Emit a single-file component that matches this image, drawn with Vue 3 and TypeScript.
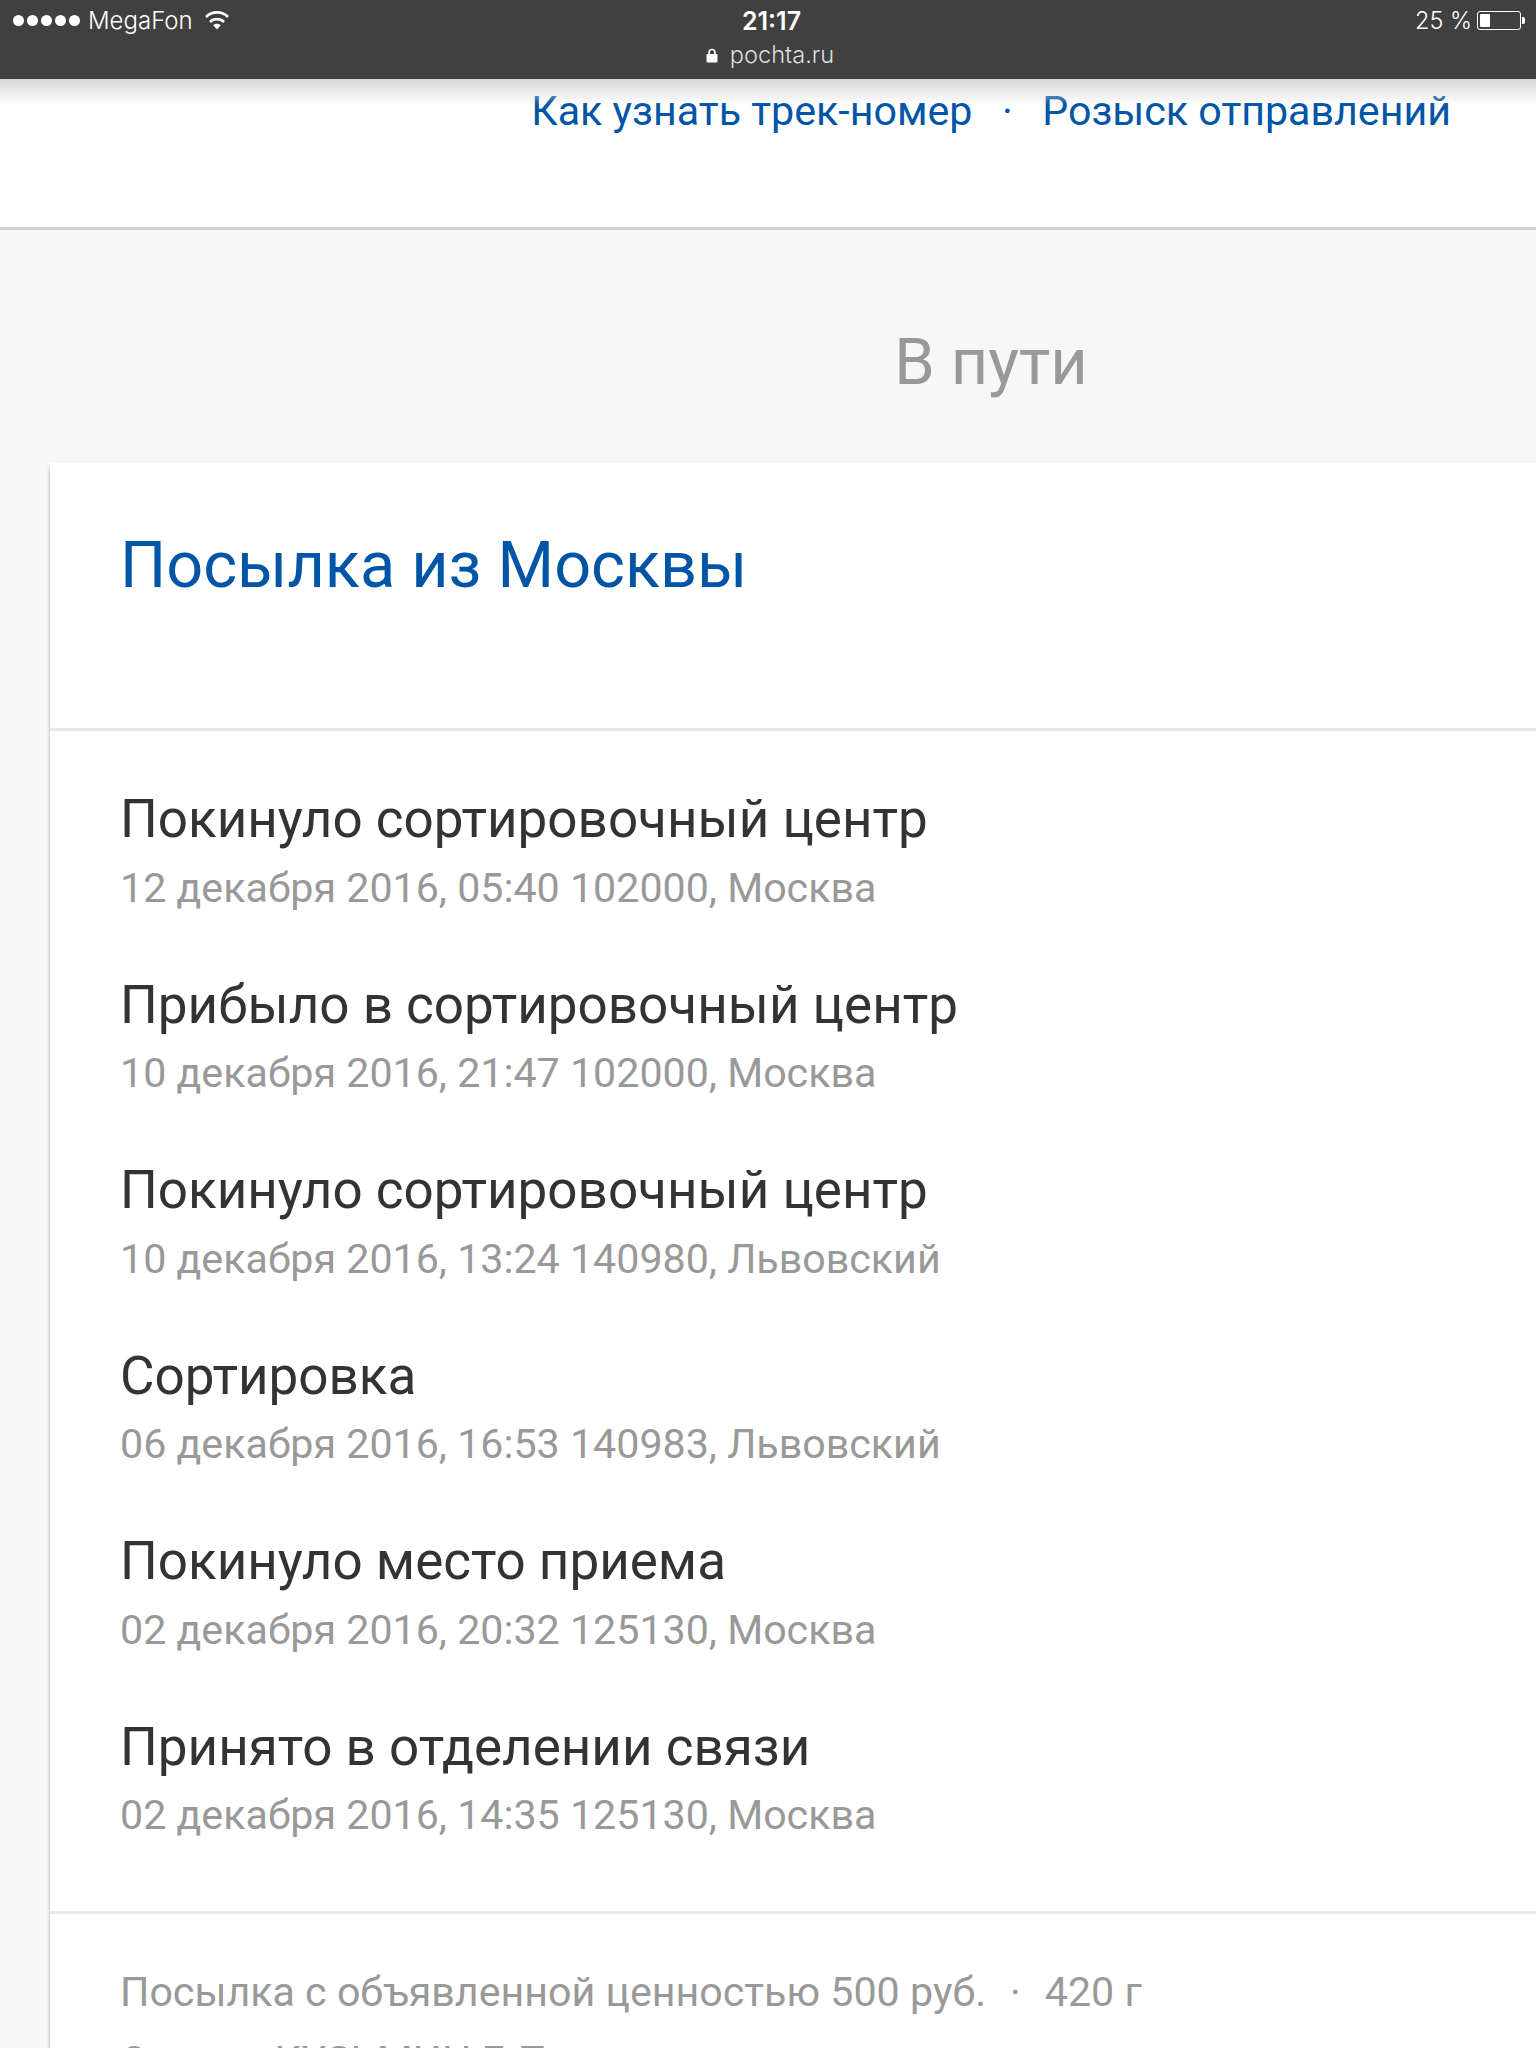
<script setup lang="ts">
interface Ev { title: string; meta: string }
const events: Ev[] = [
  { title: 'Покинуло сортировочный центр', meta: '12 декабря 2016, 05:40 102000, Москва' },
  { title: 'Прибыло в сортировочный центр', meta: '10 декабря 2016, 21:47 102000, Москва' },
  { title: 'Покинуло сортировочный центр', meta: '10 декабря 2016, 13:24 140980, Львовский' },
  { title: 'Сортировка', meta: '06 декабря 2016, 16:53 140983, Львовский' },
  { title: 'Покинуло место приема', meta: '02 декабря 2016, 20:32 125130, Москва' },
  { title: 'Принято в отделении связи', meta: '02 декабря 2016, 14:35 125130, Москва' },
]
</script>

<template>
  <div class="page">
    <div class="status">
      <div class="st-left">
        <span class="dots"><i v-for="n in 5" :key="n"></i></span>
        <span class="carrier">MegaFon</span>
        <svg class="wifi" width="26" height="19" viewBox="0 0 26 19">
          <path d="M13 18.500 9.200 14.200a5.600 5.600 0 0 1 7.600 0Z" fill="#fff"/>
          <path d="M6 11a10 10 0 0 1 14 0M2 6a15.500 15.500 0 0 1 22 0" fill="none" stroke="#fff" stroke-width="2.600"/>
        </svg>
      </div>
      <div class="st-mid">
        <div class="time">21:17</div>
        <div class="url">
          <svg width="12" height="15" viewBox="0 0 12 15"><path d="M3 7V4.500a3 3 0 0 1 6 0V7" fill="none" stroke="#fff" stroke-width="1.600"/><rect x="0.500" y="6" width="11" height="8.500" rx="1" fill="#fff"/></svg>
          <span>pochta.ru</span>
        </div>
      </div>
      <div class="st-right">
        <span>25 %</span>
        <span class="battery"><b></b></span>
        <span class="nub"></span>
      </div>
    </div>
    <div class="top">
      <div class="links">
        <a>Как узнать трек-номер</a>
        <span class="sep">·</span>
        <a>Розыск отправлений</a>
      </div>
    </div>
    <main class="body">
      <h1 class="state">В пути</h1>
      <section class="card">
        <h2 class="name">Посылка из Москвы</h2>
        <div class="events">
          <div v-for="(e, i) in events" :key="i" class="ev">
            <div class="ev-t">{{ e.title }}</div>
            <div class="ev-m">{{ e.meta }}</div>
          </div>
        </div>
        <div class="foot">
          <div class="foot-l">Посылка с объявленной ценностью 500 руб.<span class="dot">·</span>420 г</div>
          <div class="foot-l">От кого КУЗЬМИН Г. П.</div>
        </div>
      </section>
    </main>
  </div>
</template>

<style>
html, body { margin: 0; background: #f7f7f7; }
body { overflow: hidden; height: 2048px; }
</style>

<style scoped>
.page { width: 1536px; height: 2048px; overflow: hidden; font-family: Roboto, "Liberation Sans", sans-serif; background: #f7f7f7; position: relative; }
.status { height: 79px; background: #404040; color: #fff; display: grid; grid-template-columns: 1fr auto 1fr; padding: 0 11px 0 13px; box-sizing: border-box; font-family: Inter, "Liberation Sans", sans-serif; font-size: 23.600px; position: relative; z-index: 2; }
.status::after { content: ""; position: absolute; left: 0; right: 0; top: 79px; height: 26px; background: linear-gradient(to bottom, #d6d6d6, rgba(255,255,255,0)); pointer-events: none; }
.st-left { display: flex; align-items: flex-start; padding-top: 8px; height: 26px; line-height: 26px; }
.dots { display: flex; gap: 3px; margin-top: 7px; }
.dots i { width: 11px; height: 11px; border-radius: 50%; background: #fff; display: block; }
.carrier { margin-left: 8px; font-weight: 300; font-size: 24px; }
.wifi { margin-left: 11px; margin-top: 3px; }
.st-mid { text-align: center; padding-top: 8px; margin-left: 5px; }
.time { line-height: 26px; font-weight: 600; font-size: 25px; }
.url { display: flex; align-items: center; justify-content: center; gap: 12px; margin-top: 8px; margin-right: 3px; color: #ddd; line-height: 26px; font-weight: 300; }
.st-right { display: flex; justify-content: flex-end; align-items: flex-start; padding-top: 8px; line-height: 26px; font-weight: 300; font-size: 23.500px; }
.battery { width: 38px; height: 13px; border: 1px solid #fff; border-radius: 3px; margin: 3px 0 0 5px; padding: 2px; box-sizing: content-box; display: block; }
.battery b { display: block; width: 10px; height: 13px; margin: 0; background: #fff; border-radius: 1px; }
.nub { width: 3px; height: 7px; background: #fff; margin-top: 9px; margin-left: 1px; border-radius: 0 2px 2px 0; }
.top { height: 148px; background: #fff; border-bottom: 3px solid #cfcfcf; display: flex; justify-content: flex-end; padding-right: 85px; }
.links { display: flex; font-size: 41.200px; line-height: 48px; margin-top: 8px; height: 48px; color: #0055a6; }
.sep { margin: 0 29.500px; }
.body { padding-left: 50px; }
.state { margin: 0; height: 233px; box-sizing: border-box; padding: 97px 0 0 0; text-align: center; width: 1882px; font-weight: 400; font-size: 65px; line-height: 70px; color: #999; }
.card { background: #fff; box-shadow: -2px 3px 3px -1px rgba(0,0,0,.18); min-height: 1700px; }
.name { margin: 0; padding: 66px 0 0 70px; height: 268px; box-sizing: border-box; border-bottom: 3px solid #e8e8e8; font-weight: 400; font-size: 64.800px; line-height: 72px; color: #0055a6; }
.events { padding: 56px 0 0 70px; height: 1183px; box-sizing: border-box; border-bottom: 3px solid #e8e8e8; }
.ev { height: 185.500px; }
.ev-t { font-size: 53px; line-height: 64px; color: #333; }
.ev-m { font-size: 41.200px; line-height: 52px; margin-top: 10.500px; color: #999; }
.foot { padding: 52px 0 0 70px; }
.foot-l { font-size: 41.200px; line-height: 52px; color: #999; margin-bottom: 17px; }
.dot { margin: 0 24px; }
</style>
